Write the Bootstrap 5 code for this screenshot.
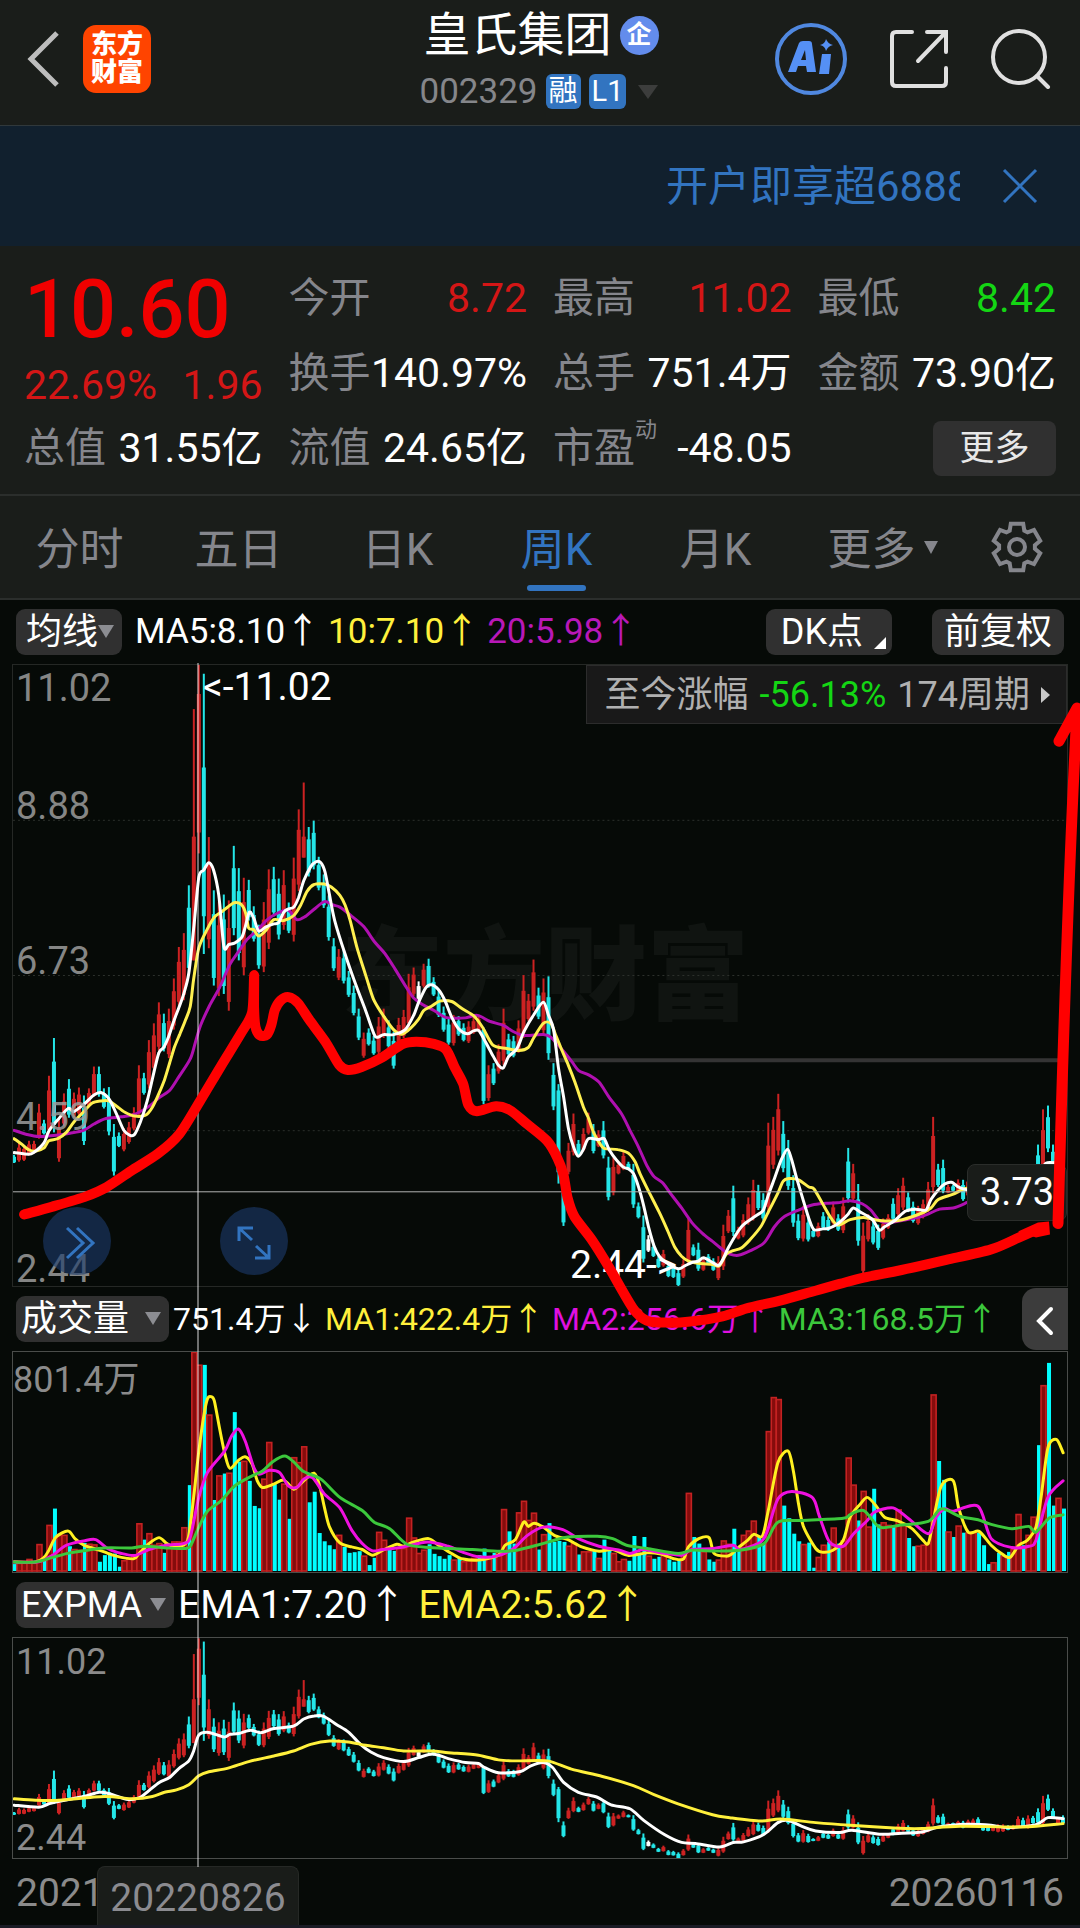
<!DOCTYPE html>
<html lang="zh-CN">
<head>
<meta charset="utf-8">
<meta name="viewport" content="width=device-width, initial-scale=1">
<title>皇氏集团 002329</title>
<link href="https://cdn.jsdelivr.net/npm/bootstrap@5.3.0/dist/css/bootstrap.min.css" rel="stylesheet">
<style>
  body { background: #060a07; color: #fff; font-family: Roboto, "Noto Sans CJK SC", sans-serif; font-size: 35px; line-height: 1; overflow-x: hidden; }
  button, a { font-family: inherit; color: inherit; text-decoration: none; }
  .plain { background: none; border: 0; padding: 0; line-height: 1; }
  .panel { background: #1a1d1a; }
  .topbar { height: 126px; border-bottom: 1px solid #30383b; padding: 0 29px 8px 27px; }
  .side { flex: 1 1 0; }
  .tools { gap: 43px; }
  .brand { width: 68px; height: 68px; border-radius: 13px; background: #ff4400; font-size: 26px; line-height: 28px; font-weight: 900; padding-top: 5px; }
  .stock-name { font-size: 47px; line-height: 54px; margin: 0; font-weight: 400; }
  .corp { width: 39px; height: 39px; border-radius: 50%; background: #638cec; font-size: 25px; line-height: 37px; font-weight: 700; }
  .code { font-size: 35px; color: #85868a; }
  .flag { height: 35px; border-radius: 6px; background: #3274c0; font-size: 29px; line-height: 35px; padding: 0 3px; }
  .tri { width: 0; height: 0; border: solid transparent; border-width: 14px 10px 0; border-top-color: #3c3d3c; }
  .banner { height: 120px; background: #11202e; color: #3274c0; padding: 0 40px 0 0; }
  .ticker { width: 294px; overflow: hidden; white-space: nowrap; font-size: 42px; line-height: 64px; padding-top: 2px; }
  .quotes { height: 250px; border-bottom: 2px solid #2b2e2c; padding: 15px 24px 0; display: grid; grid-template-columns: repeat(4, 1fr); grid-template-rows: repeat(3, 75px); column-gap: 26px; font-size: 41px; line-height: 75px; white-space: nowrap; }
  .lastbox { grid-row: span 2; color: #d41616; }
  .last { font-size: 81px; line-height: 98px; font-weight: 500; color: #f00000; }
  .chg { line-height: 52px; }
  .lab { color: #85868c; }
  .up { color: #d41616; }
  .down { color: #14d614; }
  sup.dyn { font-size: 22px; top: -25px; line-height: 1; color: #85868c; }
  .more-btn { width: 123px; height: 55px; border-radius: 8px; background: #303030; font-size: 35px; border: 0; color: #e8e8e8; line-height: 52px; padding: 0; }
  .tabs { height: 104px; border-bottom: 2px solid #2b2e2c; font-size: 44px; line-height: 96px; color: #85868c; }
  .tabs a { width: 159px; padding-top: 6px; text-align: center; position: relative; }
  .tabs a.on { color: #3274c0; }
  .tabs a.on::after { content: ""; position: absolute; left: 50px; right: 50px; bottom: 7px; height: 6px; border-radius: 3px; background: #3274c0; }
  .tabs .caret { display: inline-block; border: solid transparent; border-width: 13px 7px 0; border-top-color: #85868c; vertical-align: 11px; margin-left: 8px; }
  .legend { height: 64px; padding: 0 16px; white-space: nowrap; line-height: 46px; }
  .chip { height: 46px; border-radius: 9px; background: #303030; border: 0; color: #fff; padding: 0 5px; line-height: 44px; font-size: 36px; }
  .chip i { display: inline-block; border: solid transparent; border-width: 13px 8px 0; border-top-color: #8c8d92; vertical-align: 6px; }
  .chip-ma { padding: 0 8px 0 10px; margin-right: 13px; }
  .chip-dk { padding: 0 29px 0 15px; }
  .chip-adj { padding: 0 12px; margin-left: 40px; }
  .corner { position: relative; }
  .corner::after { content: ""; position: absolute; right: 6px; bottom: 6px; border: 6px solid; border-color: transparent #fff #fff transparent; }
  .pane { position: relative; margin: 0 12px; line-height: 40px; color: #8b8b8b; }
  .pane > svg { display: block; width: 100%; height: 100%; position: absolute; inset: 0; }
  .pane-k { height: 623px; border: 1px solid #252825; font-size: 38px; }
  .pane-v, .pane-e { height: 222px; border: 1px solid #4a4d4a; font-size: 36px; }
  .axis { position: relative; z-index: 1; height: 100%; padding: 3px; }
  .axis-k { display: grid; grid-template-rows: 118px 155px 156px 152px 40px; opacity: .85; color: #9c9c9c; }
  .since { position: absolute; z-index: 1; right: 0; top: 0; height: 59px; padding: 0 16px 0 18px; border: 1px solid #2c2c2c; background: #191919; color: #b0b0b0; font-size: 36px; line-height: 58px; gap: 11px; }
  .since i { border: solid transparent; border-width: 8px 0 8px 9px; border-left-color: #c8c8c8; }
  .water { position: absolute; left: 328px; top: 252px; font-size: 102px; line-height: 120px; font-weight: 900; color: #101411; white-space: nowrap; }
  .tag-hi, .tag-lo { position: absolute; color: #fff; font-size: 39px; }
  .tag-hi { left: 190px; top: 2px; }
  .tag-lo { left: 557px; top: 580px; }
  .round { position: absolute; z-index: 1; top: 542px; width: 68px; height: 68px; border-radius: 50%; background: rgba(27, 58, 106, .62); }
  .cross-val { position: absolute; right: 0; top: 499px; width: 100px; height: 57px; border-radius: 8px; border: 1px solid #2a2d2a; background: #191c19; color: #fff; line-height: 54px; text-align: center; }
  .fold { width: 46px; height: 62px; border-radius: 14px 0 0 14px; background: #3c3c3c; margin: 0 12px 0 24px; }
  .nums { font-size: 32px; }
  .ema { font-size: 39px; }
  .yel { color: #fff03c; } .pur { color: #b818b8; } .mag { color: #e010e0; } .grn { color: #3cc83c; }
  .dates { height: 66px; padding: 0 16px; font-size: 39px; line-height: 68px; color: #8b8b8b; }
  .cross-date { position: absolute; left: 97px; bottom: 4px; width: 202px; height: 59px; border-radius: 8px 8px 0 0; border: 1px solid #252825; border-bottom: 0; background: #191c19; color: #8b8b90; font-size: 39px; line-height: 62px; text-align: center; }
  .homebar { height: 4px; background: #1a1b25; }
  .over { position: absolute; z-index: 2; inset: 0; width: 100%; height: 100%; pointer-events: none; }
</style>
<script src="https://cdn.jsdelivr.net/npm/bootstrap@5.3.0/dist/js/bootstrap.bundle.min.js"></script>
</head>
<body>
<header class="topbar panel d-flex align-items-center">
  <div class="side d-flex align-items-center">
    <button class="plain me-4" aria-label="返回"><svg width="32" height="56" viewBox="0 0 32 56" fill="none" stroke="#bdbdbd" stroke-width="5"><path d="M30 2 4 28 30 54"/></svg></button>
    <div class="brand text-center">东方<br>财富</div>
  </div>
  <div>
    <div class="d-flex align-items-center gap-2 ps-1">
      <h1 class="stock-name">皇氏集团</h1><span class="corp text-center">企</span>
    </div>
    <div class="d-flex align-items-center gap-2 mt-2 pt-1">
      <span class="code">002329</span><span class="flag">融</span><span class="flag">L1</span><span class="tri ms-1"></span>
    </div>
  </div>
  <div class="side tools d-flex align-items-center justify-content-end">
    <button class="plain" aria-label="Ai"><svg width="72" height="72" viewBox="0 0 72 72"><circle cx="36" cy="36" r="34" fill="none" stroke="#5088e0" stroke-width="4"/><g fill="#5590f5"><path fill-rule="evenodd" d="M13 49 24 20Q25 18 28 18H34Q37 18 37 21L41 49H32L31 43H23L21 49ZM26 37H31L30 27Z"/><path d="M47 31H56L54 51H44Z"/><path d="M51 16Q53 21 58 22 53 23 51 28 50 23 45 22 50 21 51 16Z"/></g></svg></button>
    <button class="plain" aria-label="分享"><svg width="58" height="58" viewBox="0 0 58 58" fill="none" stroke="#e0e0e0" stroke-width="4" stroke-linecap="round"><path d="M22 2H6Q2 2 2 6V52Q2 56 6 56H52Q56 56 56 52V38M37 2H56V22M55 3 28 31"/></svg></button>
    <button class="plain" aria-label="搜索"><svg width="60" height="60" viewBox="0 0 60 60" fill="none" stroke="#e0e0e0" stroke-width="4" stroke-linecap="round"><circle cx="28" cy="28" r="26"/><path d="M46 47 57 58"/></svg></button>
  </div>
</header>

<div class="banner d-flex align-items-center justify-content-end">
  <a href="#" class="ticker">开户即享超6888</a>
  <button class="plain ms-4 ps-3" aria-label="关闭"><svg width="40" height="40" viewBox="0 0 40 40" stroke="#3274c0" stroke-width="3"><path d="M4 4 36 36M36 4 4 36"/></svg></button>
</div>

<section class="quotes panel">
  <div class="lastbox"><div class="last">10.60</div><div class="chg d-flex justify-content-between"><span>22.69%</span><span>1.96</span></div></div>
  <div class="d-flex justify-content-between"><span class="lab">今开</span><span class="up">8.72</span></div>
  <div class="d-flex justify-content-between"><span class="lab">最高</span><span class="up">11.02</span></div>
  <div class="d-flex justify-content-between"><span class="lab">最低</span><span class="down">8.42</span></div>
  <div class="d-flex justify-content-between"><span class="lab">换手</span><span>140.97%</span></div>
  <div class="d-flex justify-content-between"><span class="lab">总手</span><span>751.4万</span></div>
  <div class="d-flex justify-content-between"><span class="lab">金额</span><span>73.90亿</span></div>
  <div class="d-flex justify-content-between"><span class="lab">总值</span><span>31.55亿</span></div>
  <div class="d-flex justify-content-between"><span class="lab">流值</span><span>24.65亿</span></div>
  <div class="d-flex justify-content-between"><span class="lab">市盈<sup class="dyn">动</sup></span><span>-48.05</span></div>
  <div class="d-flex justify-content-end align-items-center"><button class="more-btn">更多</button></div>
</section>

<nav class="tabs panel d-flex align-items-center">
  <a href="#">分时</a><a href="#">五日</a><a href="#">日K</a><a href="#" class="on">周K</a><a href="#">月K</a><a href="#" class="ps-3">更多<span class="caret"></span></a>
  <button class="plain mx-auto" aria-label="设置"><svg width="54" height="54" viewBox="-27 -27 54 54" fill="none" stroke="#85868c" stroke-width="4"><circle r="8"/><path id="gear"/></svg></button>
</nav>

<main class="position-relative">
  <div class="legend d-flex align-items-center">
    <button class="chip chip-ma">均线<i></i></button>
    <span>MA5:8.10↑</span><span class="yel mx-2">10:7.10↑</span><span class="pur">20:5.98↑</span>
    <button class="chip corner chip-dk ms-auto">DK点</button><button class="chip chip-adj">前复权</button>
  </div>
  <section class="pane pane-k">
    <div class="water">东方财富</div>
    <svg id="kline" viewBox="12 663 1055 623" preserveAspectRatio="none" role="img" aria-label="周K线"></svg>
    <div class="axis axis-k"><span>11.02</span><span>8.88</span><span>6.73</span><span>4.59</span><span>2.44</span></div>
    <div class="tag-hi">&lt;-11.02</div>
    <div class="tag-lo">2.44-&gt;</div>
    <div class="since d-flex align-items-center"><span>至今涨幅</span><span class="down">-56.13%</span><span>174周期</span><i></i></div>
    <div class="cross-val">3.73</div>
    <button class="plain round" style="left:30px" aria-label="展开"><svg width="40" height="36" viewBox="0 0 40 36" fill="none" stroke="#3274c0" stroke-width="3"><path d="M10 3 26 18 10 33M20 3 36 18 20 33"/></svg></button>
    <button class="plain round" style="left:207px" aria-label="全屏"><svg width="36" height="36" viewBox="0 0 36 36" fill="none" stroke="#3274c0" stroke-width="3"><path d="M3 16V3H17M3 3 16 15M33 20V33H19M33 33 20 21"/></svg></button>
  </section>
  <div class="legend d-flex align-items-center pe-0">
    <button class="chip pe-2">成交量<i class="ms-3"></i></button>
    <div class="nums d-flex flex-fill justify-content-between ps-1"><span>751.4万↓</span><span class="yel">MA1:422.4万↑</span><span class="mag">MA2:256.6万↑</span><span class="grn">MA3:168.5万↑</span></div>
    <button class="plain fold" aria-label="收起"><svg width="18" height="30" viewBox="0 0 18 30" fill="none" stroke="#fff" stroke-width="4" stroke-linecap="round"><path d="M15 3 3 15 15 27"/></svg></button>
  </div>
  <section class="pane pane-v">
    <div class="axis pt-2 ps-0">801.4万</div>
    <svg id="volume" viewBox="12 1350 1055 222" preserveAspectRatio="none" role="img" aria-label="成交量"></svg>
  </section>
  <div class="legend d-flex align-items-center">
    <button class="chip pe-2">EXPMA<i class="ms-2"></i></button>
    <div class="ema ps-1"><span class="me-2 pe-1">EMA1:7.20↑</span><span class="yel">EMA2:5.62↑</span></div>
  </div>
  <section class="pane pane-e">
    <svg id="expma" viewBox="12 1636 1055 222" preserveAspectRatio="none" role="img" aria-label="EXPMA"></svg>
    <div class="axis d-flex flex-column justify-content-between pt-1 pb-0"><span>11.02</span><span>2.44</span></div>
  </section>
  <div class="dates d-flex justify-content-between"><span>2021</span><span>20260116</span></div>
  <div class="homebar"></div>
  <svg class="over" id="over" viewBox="0 600 1080 1328" preserveAspectRatio="none" aria-hidden="true"></svg>
  <div class="cross-date">20220826</div>
</main>

<script>
// One entry per week: direction (r up, c down, w flat), high, low.
const weeks = `c1198-1218 r1170-1215 r1175-1213 r1165-1200 r1165-1195 r1077-1160 c1115-1150 r1010-1150 c920-1145 r1110-1215 r1052-1130 c1018-1110 r1050-1110 r1038-1105 c1057-1175 r1040-1085 r988-1060 c988-1060 c1040-1088 c1037-1152 c1125-1248 c1145-1180 r1135-1190 r1120-1172 r1085-1140 r985-1110 c1003-1055 r925-1040 r885-1000 r835-950 c862-952 r850-968 r778-900 r703-845 r670-830 c556-770 r136-735 r30-480 c52-720 r441-706 c568-795 r595-820 c578-815 r592-855 c462-675 c515-735 r538-770 c543-640 c606-690 c650-755 r596-763 r518-708 c512-630 c540-685 r520-662 c597-670 r490-690 r375-570 r311-490 c417-535 c402-518 c488-568 c530-610 c580-688 c682-760 r708-782 c710-790 c760-822 c795-866 c850-925 r907-967 c897-938 c915-960 r870-960 r850-920 c878-945 c905-993 r872-940 r853-920 r767-895 r752-820 w785-830 r743-800 c731-800 c775-820 c805-870 c845-905 c872-936 r865-938 c868-915 c885-928 r880-932 r870-910 r865-905 c895-1078 r985-1070 c980-1032 r935-1005 r850-985 c910-963 c915-966 r878-955 r770-920 r815-880 r733-855 c800-875 r778-912 c773-972 c980-1092 c1030-1267 c1262-1368 r1170-1245 r1100-1200 c1163-1200 r1135-1190 r1098-1150 c1125-1195 r1140-1180 c1118-1207 c1203-1307 r1205-1295 r1215-1245 r1190-1235 c1215-1235 c1220-1325 c1312-1350 c1343-1455 w1390-1430 c1410-1442 c1440-1468 r1425-1465 c1455-1490 c1460-1492 c1470-1512 r1448-1492 r1350-1460 c1412-1440 c1408-1475 r1442-1475 c1435-1460 c1445-1475 r1440-1497 r1365-1473 r1330-1385 c1272-1392 r1370-1400 r1340-1395 r1300-1365 r1258-1355 c1270-1330 c1290-1355 r1122-1340 r1108-1232 r1053-1200 c1118-1240 c1163-1282 c1247-1370 c1340-1402 r1320-1405 c1345-1405 c1375-1395 r1360-1395 c1335-1375 c1345-1380 r1310-1365 c1340-1380 r1300-1385 c1182-1312 r1220-1310 c1268-1415 r1360-1485 r1340-1405 c1355-1412 c1365-1425 r1350-1400 r1340-1375 c1302-1355 r1278-1345 r1253-1330 c1288-1335 c1310-1360 r1320-1365 r1305-1350 r1263-1335 r1108-1290 c1220-1275 c1210-1290 r1270-1290 c1270-1285 r1257-1290 c1258-1308 r1250-1299 r1243-1294 c1234-1288 c1288-1325 c1299-1328 r1288-1328 r1281-1335 r1281-1332 c1288-1321 r1285-1317 r1228-1299 c1237-1305 r1221-1310 c1225-1277 c1174-1277 r1090-1288 c1081-1192 c1174-1243 r1232-1277 c1221-1277`.split(' ');
const volumes = `c882 r880 r878 r868 r875 r823 c868 r765 c714 r795 r795 c828 r838 r840 c818 r822 r824 c875 c855 c848 c850 c890 r872 r865 r855 r760 c808 r790 r825 r820 c848 r828 r815 r815 r772 c643 r241 r280 c279 r431 c688 r615 c608 r607 c422 c572 r571 c630 c706 c713 r625 r514 c640 c687 r640 c745 r560 r575 r527 c695 c663 c788 c813 c825 c837 r795 c830 c848 c846 c843 r858 c885 c863 r786 r810 c835 c842 r835 r835 r743 r803 r850 r840 c822 c851 c858 c866 c855 r870 c864 r875 r870 r865 c855 c835 r862 c848 r845 r717 c783 c820 r727 r692 r750 r728 c838 r793 c758 c815 c812 c815 r828 r820 c853 r845 r845 c842 r865 c808 c838 r850 r875 r868 c872 c797 c848 c800 r858 c866 c860 r850 c868 c875 c868 r850 r668 c800 c820 r845 c868 c875 r870 r812 r822 c775 c832 r795 r782 r752 c800 c820 r481 r378 r384 c705 c743 c790 c813 r823 c817 c893 r862 r825 c815 r773 c820 r812 r561 r643 c750 r662 r770 c654 c762 r757 r765 c768 r718 r765 c803 c828 r828 r825 r820 r370 c570 c627 r785 c800 r767 c787 r788 r785 c787 c825 c882 r878 c848 r858 c845 r838 r732 c825 r795 r740 c522 r342 c273 c705 r683 c714`.split(' ');

// Indicator traces: left half | right half (x restarts at the middle).
const ma5 = "38,1193 80,1197 95,1193 125,1170 139,1142 165,1115 195,1088 212,1095 241,1078 270,1056 290,1050 314,1065 335,1100 357,1140 375,1152 388,1150 405,1120 425,1070 445,1000 459,955 473,942 488,915 502,880 517,848 531,815 546,765 560,660 575,537 589,520 604,502 618,520 633,580 648,702 662,697 680,693 700,680 710,655 722,620 735,635 749,665 770,655 793,648 807,645 822,620 836,612 851,608 865,585 880,545 900,512 915,500 930,502 942,525 955,580 970,640 1000,720 1030,790 1060,855 1085,912 1095,918 1112,912 1141,912 1175,900 1200,865 1214,835 1235,800 1252,793 1272,805 1290,830 1310,870 1330,898 1355,910 1373,903 1388,902 1402,920 1425,955 1446,985 1460,991 1475,965 1500,945 1520,905 1548,865|8,835 23,865 38,900 52,990 67,1060 81,1135 96,1180 110,1202 125,1185 139,1160 168,1162 185,1160 200,1187 220,1210 241,1228 256,1232 270,1243 285,1275 300,1320 314,1370 330,1415 345,1440 365,1455 400,1470 420,1463 440,1455 459,1452 474,1444 500,1455 517,1462 530,1448 546,1420 575,1380 590,1365 615,1350 633,1340 648,1330 662,1295 680,1255 700,1210 718,1185 730,1210 745,1255 765,1310 780,1350 795,1377 820,1375 836,1374 860,1365 880,1352 894,1340 909,1325 930,1335 952,1345 967,1355 985,1378 1000,1370 1030,1355 1060,1333 1090,1328 1120,1330 1135,1305 1156,1282 1175,1268 1195,1264 1214,1275 1240,1282 1300,1290 1380,1290 1420,1270 1450,1240 1470,1218 1500,1218";
const ma10 = "38,1160 60,1173 80,1186 100,1190 125,1182 139,1165 165,1160 190,1145 212,1120 241,1095 265,1075 290,1070 314,1070 335,1082 360,1097 388,1106 420,1104 440,1085 459,1052 475,1020 490,980 505,940 520,910 535,880 550,845 560,780 575,705 600,660 620,632 640,620 660,607 680,597 700,603 712,625 720,658 735,662 749,677 770,663 793,638 822,640 851,628 870,605 890,570 910,554 940,553 960,560 985,580 1000,603 1015,640 1035,705 1060,770 1083,828 1110,865 1141,900 1165,911 1190,897 1214,875 1228,855 1250,845 1275,832 1310,833 1340,850 1375,868 1400,895 1430,937 1470,945 1505,950 1533,942 1548,920|8,885 30,885 45,915 60,945 81,985 100,1025 125,1085 139,1110 154,1145 170,1168 185,1183 225,1186 256,1195 275,1215 290,1245 314,1285 345,1335 370,1380 390,1418 410,1440 430,1452 459,1457 500,1460 520,1463 540,1435 560,1427 585,1420 610,1400 640,1370 662,1335 690,1290 705,1262 722,1255 750,1258 780,1275 795,1280 820,1315 845,1350 865,1366 900,1353 940,1348 985,1355 1040,1355 1100,1340 1135,1325 1156,1305 1200,1292 1240,1278 1300,1285 1400,1285 1500,1268";
const ma20 = "38,1140 75,1150 110,1155 160,1152 200,1147 240,1140 270,1125 305,1112 350,1108 388,1102 430,1083 460,1062 490,1045 515,1015 550,970 565,930 580,890 605,845 635,800 665,745 690,715 715,685 745,663 775,637 805,622 835,615 860,638 885,630 910,613 940,595 965,603 985,608 1020,630 1055,655 1085,690 1115,718 1145,755 1175,795 1200,825 1225,840 1260,855 1290,870 1320,873 1350,872 1385,866 1420,880 1460,890 1490,905 1520,914|8,912 30,918 60,945 90,975 110,997 140,1008 170,1025 200,1062 235,1100 260,1140 285,1180 310,1225 330,1250 355,1265 380,1293 410,1325 440,1360 470,1385 500,1405 530,1425 550,1435 575,1438 610,1427 650,1408 680,1370 710,1345 750,1330 790,1318 830,1314 870,1312 900,1308 935,1315 960,1330 985,1355 1010,1360 1050,1355 1110,1345 1160,1328 1200,1325 1240,1312";
const vma1 = "38,875 100,876 125,862 139,840 160,800 195,782 215,805 241,825 270,835 300,845 335,858 385,866 401,850 430,820 459,802 480,818 500,828 530,825 545,800 560,680 575,540 590,430 600,382 610,375 620,388 635,470 650,545 665,592 690,568 710,557 730,580 745,630 760,650 793,640 822,628 850,655 865,645 890,620 910,607 925,640 940,710 955,770 985,818 1020,830 1050,838 1080,855 1110,840 1150,822 1170,828 1200,815 1243,805 1272,825 1310,850 1340,866 1388,870 1446,855 1465,825 1495,808 1519,755 1533,768 1550,758|8,770 40,795 80,808 120,830 170,843 210,838 256,856 310,848 350,852 385,865 415,867 430,830 460,805 490,802 505,850 540,858 555,852 575,832 600,812 620,792 645,797 662,720 690,575 720,540 735,600 750,700 765,770 800,835 820,846 850,840 880,810 900,740 930,700 950,680 975,705 1000,740 1040,752 1080,775 1110,808 1127,820 1140,760 1165,645 1200,630 1215,710 1243,785 1275,783 1310,825 1340,850 1365,862 1390,825 1415,810 1440,770 1455,680 1475,530 1500,505 1519,545";
const vma2 = "38,876 110,875 150,855 190,825 240,812 275,808 310,835 350,850 390,856 430,838 480,825 530,820 550,800 575,680 600,605 650,540 670,495 690,473 710,510 735,590 750,610 780,598 810,605 835,645 860,650 880,625 905,620 940,670 985,712 1020,780 1050,820 1080,842 1110,838 1170,830 1240,815 1300,828 1340,845 1388,860 1440,858 1490,835 1530,795|8,770 65,778 110,805 170,828 230,840 260,850 300,838 350,848 410,855 440,838 500,835 560,825 580,838 640,815 660,780 690,685 730,662 790,680 810,735 840,815 880,828 910,790 950,750 970,725 1025,712 1070,745 1127,790 1150,740 1175,715 1200,722 1272,707 1310,805 1370,832 1420,828 1440,810 1475,680 1519,630";
const vma3 = "38,876 100,876 150,862 200,848 250,840 300,833 380,833 415,828 480,833 530,835 550,828 575,770 600,722 640,690 680,645 730,615 760,600 790,572 825,555 850,572 880,602 930,625 985,680 1050,720 1085,755 1130,775 1180,822 1250,832 1370,838 1450,843 1500,840|0,822 40,810 80,800 165,798 210,805 250,825 310,835 400,850 440,840 500,842 580,840 650,820 690,755 760,750 880,743 900,732 940,720 985,770 1040,765 1127,753 1165,715 1220,738 1272,748 1310,762 1370,775 1420,768 1440,785 1480,742 1519,733";
const ema1 = "38,704 110,710 139,700 170,692 240,678 285,665 310,668 370,687 405,680 430,660 460,635 490,620 517,593 546,570 560,540 575,492 604,484 648,498 665,490 691,487 725,477 755,485 793,472 850,465 880,443 910,434 938,435 975,460 1010,483 1045,520 1075,543 1112,560 1170,572 1214,560 1255,549 1300,563 1350,575 1388,578 1402,588 1446,606 1510,602 1540,585|8,575 35,590 67,635 110,665 165,680 205,703 260,715 300,750 360,793 410,817 450,820 520,831 560,817 590,815 650,792 690,757 718,750 760,768 800,782 870,787 905,780 985,792 1040,790 1110,785 1156,770 1243,762 1310,765 1360,772 1440,763 1475,742 1519,745";
const ema2 = "38,685 100,689 170,689 300,678 385,685 440,678 475,665 510,658 546,642 575,615 604,603 660,592 720,572 793,555 850,540 900,520 955,510 1010,513 1060,523 1112,530 1170,540 1250,540 1300,545 1388,553 1446,567 1500,570|20,570 90,595 180,617 270,645 330,672 400,700 500,733 550,742 640,752 700,746 800,757 900,765 1040,774 1110,775 1220,768 1400,770 1519,760";
const rally = "70,1340 150,1322 250,1297 310,1275 380,1237 460,1195 520,1150 580,1072 640,990 700,910 732,860 738,772 738,850 742,895 755,915 775,913 788,890 798,855 815,832 838,824 865,838 900,880 945,930 985,985 1010,997 1050,990 1110,967 1170,935 1210,930 1260,935 1295,948 1320,990 1345,1030 1360,1080 1385,1095 1440,1083 1480,1092 1530,1125|20,1165 50,1205 68,1245 80,1300 100,1345 150,1400 200,1465 270,1563 310,1592 370,1597 430,1595 530,1582 600,1563 700,1544 800,1521 870,1505 940,1490 1050,1472 1180,1448 1310,1423 1390,1395 1450,1373";

const SX = 2.904;
const yK = v => 650 + v / 2.376;
const yV = v => 1270 + v / 3;
const yE = v => 1570 + v / 3;
const yKE = v => 1636.3 + (v - 30) * 0.15;
const pts = (s, fy) => s.split('|').flatMap((half, h) => half.trim().split(' ').map(p => {
  const [x, y] = p.split(',').map(Number);
  return [h * 540 + x / SX, fy(y)];
}));
// Rounded curve through all points.
function curve(p) {
  let d = `M${p[0][0].toFixed(1)} ${p[0][1].toFixed(1)}`;
  for (let i = 0; i < p.length - 1; i++) {
    const a = p[i - 1] || p[i], b = p[i], c = p[i + 1], e = p[i + 2] || c;
    d += `C${[b[0] + (c[0] - a[0]) / 7, b[1] + (c[1] - a[1]) / 7, c[0] - (e[0] - b[0]) / 7, c[1] - (e[1] - b[1]) / 7, c[0], c[1]].map(n => n.toFixed(1)).join(' ')}`;
  }
  return d;
}
const line = (s, fy, color, w = 3) => `<path d="${curve(pts(s, fy))}" fill="none" stroke="${color}" stroke-width="${w}" stroke-linejoin="round" stroke-linecap="round"/>`;
const tone = { r: '#cc2222', c: '#24e6e8', w: '#fff' };
const bodies = { 36: [440, 735], 37: [100, 430], 38: [275, 630], 58: [440, 490], 109: [1045, 1240], 94: [900, 1070] };
function candles(fy) {
  return weeks.map((s, i) => {
    const [hi, lo] = s.slice(1).split('-').map(Number), x = 13 + 5 * i;
    const [t, b] = bodies[i] || [hi + (lo - hi) * .25, hi + (lo - hi) * .92];
    return `<path stroke="${tone[s[0]]}" stroke-width="2" d="M${x} ${fy(hi)}V${fy(lo)}"/><path stroke="${tone[s[0]]}" stroke-width="4" d="M${x} ${fy(t)}V${fy(b)}"/>`;
  }).join('');
}
const grid = [818.8, 974.5, 1130.2].map(y => `<path d="M12 ${y}H1067" stroke="#2c302c" stroke-dasharray="2 3"/>`).join('');
document.getElementById('kline').innerHTML = grid
  + '<path d="M549 1059.5H1059" stroke="#343434" stroke-width="4"/>' + candles(yK)
  + line(ma20, yK, '#b010b0') + line(ma10, yK, '#fff050') + line(ma5, yK, '#fff')
  + '<path d="M12 1191.5H970" stroke="#b4b4b4"/>';
document.getElementById('volume').innerHTML = volumes.map((s, i) => {
  const x = 13 + 5 * i, y = yV(+s.slice(1)), h = 1571 - y;
  return s[0] === 'r' ? `<rect x="${x - 2}" y="${y}" width="5" height="${h}" fill="#850c0c" stroke="#c42222" stroke-width="1.6"/>`
    : `<rect x="${x - 1}" y="${y}" width="4" height="${h}" fill="#0ff"/>`;
}).join('') + line(vma1, yV, '#fff020') + line(vma2, yV, '#f010e0') + line(vma3, yV, '#3cc83c');
document.getElementById('expma').innerHTML = candles(yKE) + line(ema1, yE, '#fff') + line(ema2, yE, '#fff03c');
document.getElementById('over').innerHTML = '<path d="M198 663V1866" stroke="#fff" stroke-opacity=".42" stroke-width="2"/>'
  + line(rally, yK, '#f00', 10)
  + '<path d="M1018 1231 1038 1222 1049 1221 1050 1234 1036 1237Z" fill="#f00"/>'
  + '<path d="M1058 1223C1062 1080 1068 880 1077 710M1059 741 1077 708 1084 712" fill="none" stroke="#f00" stroke-width="11" stroke-linecap="round" stroke-linejoin="round"/>';

// Gear outline with six square teeth.
let g = '';
for (let k = 0; k < 6; k++) {
  [[-24, 18], [-15, 24], [15, 24], [24, 18]].forEach(([a, r]) => {
    const t = (k * 60 + a - 90) * Math.PI / 180;
    g += `${g ? 'L' : 'M'}${(r * Math.cos(t)).toFixed(1)} ${(r * Math.sin(t)).toFixed(1)}`;
  });
}
document.getElementById('gear').setAttribute('d', g + 'Z');
</script>
</body>
</html>
